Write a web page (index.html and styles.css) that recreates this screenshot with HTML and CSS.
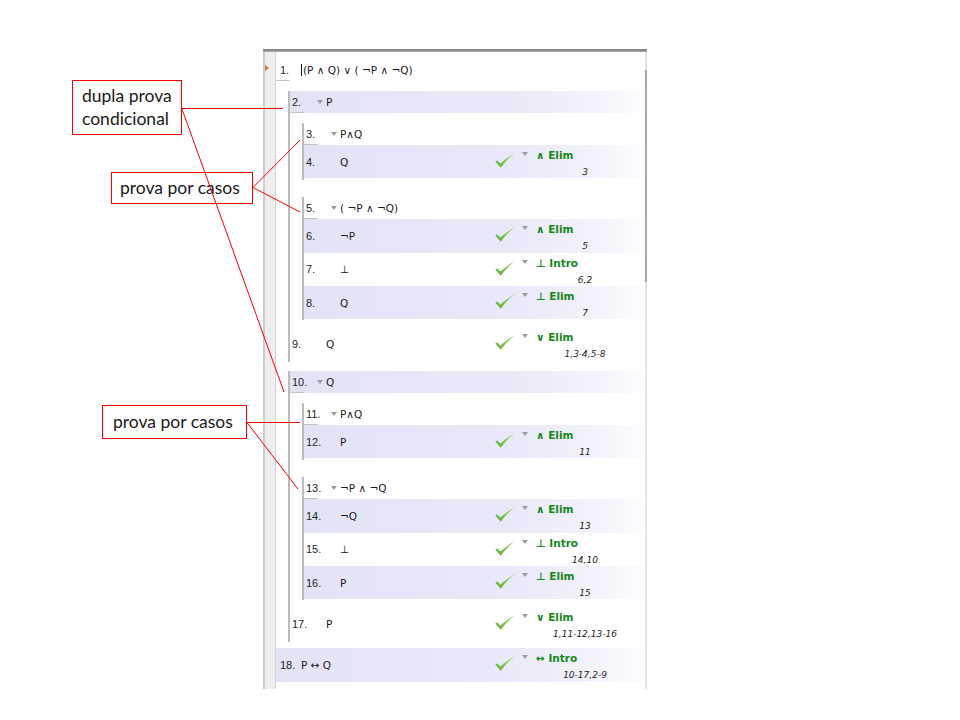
FILE: index.html
```html
<!DOCTYPE html>
<html lang="pt">
<head>
<meta charset="utf-8">
<title>Prova</title>
<link rel="stylesheet" href="styles.css">
</head>
<body>
<div class="page">
  <svg class="defs" width="0" height="0" aria-hidden="true"><defs><linearGradient id="cg" x1="0" y1="1" x2="1" y2="0"><stop offset="0" stop-color="#5da63a"/><stop offset="0.5" stop-color="#82c852"/><stop offset="1" stop-color="#b4e38a"/></linearGradient><symbol id="ck" viewBox="0 0 20 15"><path d="M0.3 8.6 L2.3 7.5 L5.4 10.6 Q12 4 19.8 0.2 Q12.5 5.6 5.7 14.8 Z"/></symbol></defs></svg>
  <div class="panel">
    <div class="panel-top"></div>
    <div class="panel-body">
      <div class="gutter"><span class="pointer"></span></div>
      <div class="proof">
        <div class="row hyp lvl0"><span class="num">1.</span><span class="fml"><span class="caret"></span>(P ∧ Q) ∨ ( ¬P ∧ ¬Q)</span></div>

        <div class="sub sub-outer">
          <div class="row hyp band"><span class="num">2.</span><span class="tri"></span><span class="fml">P</span></div>
          <div class="sub sub-first">
            <div class="row hyp"><span class="num">3.</span><span class="tri"></span><span class="fml">P∧Q</span></div>
            <div class="row step band"><span class="num">4.</span><span class="fml">Q</span>
              <div class="just">
                <svg class="check"><use href="#ck"/></svg>
                <span class="jtri"></span>
                <div class="rule"><div class="rname">∧ Elim</div><div class="refs">3</div></div>
              </div>
            </div>
          </div>
          <div class="sub sub-second">
            <div class="row hyp"><span class="num">5.</span><span class="tri"></span><span class="fml">( ¬P ∧ ¬Q)</span></div>
            <div class="row step band"><span class="num">6.</span><span class="fml">¬P</span>
              <div class="just">
                <svg class="check"><use href="#ck"/></svg>
                <span class="jtri"></span>
                <div class="rule"><div class="rname">∧ Elim</div><div class="refs">5</div></div>
              </div>
            </div>
            <div class="row step"><span class="num">7.</span><span class="fml">⊥</span>
              <div class="just">
                <svg class="check"><use href="#ck"/></svg>
                <span class="jtri"></span>
                <div class="rule"><div class="rname">⊥ Intro</div><div class="refs">6,2</div></div>
              </div>
            </div>
            <div class="row step band"><span class="num">8.</span><span class="fml">Q</span>
              <div class="just">
                <svg class="check"><use href="#ck"/></svg>
                <span class="jtri"></span>
                <div class="rule"><div class="rname">⊥ Elim</div><div class="refs">7</div></div>
              </div>
            </div>
          </div>
          <div class="row step closing"><span class="num">9.</span><span class="fml">Q</span>
            <div class="just">
              <svg class="check"><use href="#ck"/></svg>
              <span class="jtri"></span>
              <div class="rule"><div class="rname">∨ Elim</div><div class="refs">1,3-4,5-8</div></div>
            </div>
          </div>
        </div>

        <div class="sub sub-outer sub-next">
          <div class="row hyp band"><span class="num">10.</span><span class="tri"></span><span class="fml">Q</span></div>
          <div class="sub sub-first">
            <div class="row hyp"><span class="num">11.</span><span class="tri"></span><span class="fml">P∧Q</span></div>
            <div class="row step band"><span class="num">12.</span><span class="fml">P</span>
              <div class="just">
                <svg class="check"><use href="#ck"/></svg>
                <span class="jtri"></span>
                <div class="rule"><div class="rname">∧ Elim</div><div class="refs">11</div></div>
              </div>
            </div>
          </div>
          <div class="sub sub-second">
            <div class="row hyp"><span class="num">13.</span><span class="tri"></span><span class="fml">¬P ∧ ¬Q</span></div>
            <div class="row step band"><span class="num">14.</span><span class="fml">¬Q</span>
              <div class="just">
                <svg class="check"><use href="#ck"/></svg>
                <span class="jtri"></span>
                <div class="rule"><div class="rname">∧ Elim</div><div class="refs">13</div></div>
              </div>
            </div>
            <div class="row step"><span class="num">15.</span><span class="fml">⊥</span>
              <div class="just">
                <svg class="check"><use href="#ck"/></svg>
                <span class="jtri"></span>
                <div class="rule"><div class="rname">⊥ Intro</div><div class="refs">14,10</div></div>
              </div>
            </div>
            <div class="row step band"><span class="num">16.</span><span class="fml">P</span>
              <div class="just">
                <svg class="check"><use href="#ck"/></svg>
                <span class="jtri"></span>
                <div class="rule"><div class="rname">⊥ Elim</div><div class="refs">15</div></div>
              </div>
            </div>
          </div>
          <div class="row step closing"><span class="num">17.</span><span class="fml">P</span>
            <div class="just">
              <svg class="check"><use href="#ck"/></svg>
              <span class="jtri"></span>
              <div class="rule"><div class="rname">∨ Elim</div><div class="refs">1,11-12,13-16</div></div>
            </div>
          </div>
        </div>

        <div class="row step band lvl0 last"><span class="num">18.</span><span class="fml">P ↔ Q</span>
          <div class="just">
            <svg class="check"><use href="#ck"/></svg>
            <span class="jtri"></span>
            <div class="rule"><div class="rname">↔ Intro</div><div class="refs">10-17,2-9</div></div>
          </div>
        </div>
      </div>
    </div>
    <span class="thumb"></span>
  </div>

  <div class="note note-a">dupla prova<br>condicional</div>
  <div class="note note-b">prova por casos</div>
  <div class="note note-c">prova por casos</div>

  <svg class="leaders" viewBox="0 0 960 720">
    <line x1="182" y1="108.5" x2="283" y2="108.5"/>
    <line x1="182" y1="109" x2="284" y2="392"/>
    <line x1="253" y1="187.5" x2="300" y2="140"/>
    <line x1="253" y1="187.5" x2="300" y2="212"/>
    <line x1="247" y1="422.5" x2="300" y2="422.5"/>
    <line x1="247" y1="422.5" x2="298" y2="489"/>
  </svg>
</div>
</body>
</html>
```

FILE: styles.css
```css
* {
  box-sizing: border-box;
}

body {
  margin: 0;
  background: #ffffff;
}

.page {
  position: relative;
  width: 960px;
  height: 720px;
  overflow: hidden;
  padding: 49px 0 0 263px;
}

.defs {
  position: absolute;
  width: 0;
  height: 0;
}

/* ---------- proof panel ---------- */
.panel {
  position: relative;
  width: 384px;
  height: 640px;
  display: flex;
  flex-direction: column;
}

.panel-top {
  height: 3px;
  background: linear-gradient(#7c7c7c, #a9a9a9);
}

.panel-body {
  flex: 1;
  display: flex;
  border-right: 2px solid #e3e3e3;
}

.thumb {
  position: absolute;
  right: 0;
  top: 21px;
  width: 2px;
  height: 212px;
  background: #a6a6a6;
}

.gutter {
  position: relative;
  width: 13px;
  flex: none;
  background: #eeeeee;
  border-left: 2px solid #cdcdcd;
  border-right: 1px solid #d4d4d4;
}

.pointer {
  position: absolute;
  left: 0;
  top: 13px;
  width: 0;
  height: 0;
  border-left: 4px solid #cf7a2e;
  border-top: 3px solid transparent;
  border-bottom: 3px solid transparent;
}

.proof {
  flex: 1;
  padding-top: 7px;
  font-family: "DejaVu Sans", sans-serif;
  font-size: 10.5px;
  color: #222222;
}

/* subproof brackets */
.sub {
  margin-left: 12px;
  border-left: 2px solid #bcbcbc;
}

.sub-outer {
  margin-top: 10px;
  padding-bottom: 1.5px;
}

.sub-next {
  margin-top: 9px;
}

.sub-first {
  margin-top: 10px;
  padding-bottom: 2px;
}

.sub-second {
  margin-top: 17px;
  padding-bottom: 1px;
}

/* rows */
.row {
  position: relative;
  display: flex;
  align-items: center;
  height: 22px;
  padding-left: 2px;
  white-space: nowrap;
}

.row.lvl0 {
  padding-left: 4px;
}

.row.step {
  height: 33.33px;
}

.row.closing {
  margin-top: 7px;
}

.row.last {
  margin-top: 6px;
}

.row.hyp::after {
  content: "";
  position: absolute;
  left: 0;
  bottom: 0;
  width: 14px;
  height: 1px;
  background: #c4c4c4;
}

.band {
  background: linear-gradient(to right, #e3e3f6 0%, #e9e9f9 62%, #f4f4fc 88%, #fdfdff 100%);
}

.num {
  flex: none;
  width: 24px;
  font-family: "Liberation Sans", sans-serif;
  font-size: 11px;
  color: #1e1e1e;
}

.lvl0 .num {
  width: 21px;
}

.tri {
  flex: none;
  width: 0;
  height: 0;
  margin: 0 3px 0 1px;
  border-left: 3px solid transparent;
  border-right: 3px solid transparent;
  border-top: 4px solid #9c9c9c;
}

.fml {
  color: #24181c;
}

.step .fml {
  padding-left: 10px;
}

.lvl0.step .fml {
  padding-left: 0;
}

.caret {
  display: inline-block;
  width: 1px;
  height: 12px;
  margin-right: 1px;
  background: #111111;
  vertical-align: -2px;
}

/* justification column */
.just {
  margin-left: auto;
  width: 150px;
  align-self: stretch;
  display: flex;
  align-items: flex-start;
  flex: none;
}

.check {
  flex: none;
  width: 20px;
  height: 15px;
  margin-top: 8px;
  fill: url(#cg);
}

.jtri {
  flex: none;
  width: 0;
  height: 0;
  margin: 7px 0 0 7px;
  border-left: 3px solid transparent;
  border-right: 3px solid transparent;
  border-top: 4px solid #9c9c9c;
}

.rule {
  flex: none;
  width: 98px;
  margin-left: 8px;
  padding-top: 3px;
}

.rname {
  font-family: "DejaVu Sans", sans-serif;
  font-weight: bold;
  font-size: 10.5px;
  line-height: 14px;
  color: #17861b;
}

.refs {
  margin-top: 4px;
  font-family: "DejaVu Sans", sans-serif;
  font-style: italic;
  font-size: 9px;
  line-height: 12px;
  text-align: center;
  color: #222222;
}

/* ---------- annotations ---------- */
.note {
  position: absolute;
  border: 1px solid #ff0000;
  background: #ffffff;
  font-family: Lato, "Open Sans", sans-serif;
  font-size: 17.5px;
  color: #1a1a1a;
  white-space: nowrap;
}

.note-a {
  left: 72px;
  top: 80px;
  width: 110px;
  height: 55px;
  padding: 4px 0 0 9px;
  line-height: 22.5px;
}

.note-b {
  left: 111px;
  top: 172px;
  width: 142px;
  height: 32px;
  padding-left: 8px;
  line-height: 29px;
}

.note-c {
  left: 102px;
  top: 405px;
  width: 145px;
  height: 34px;
  padding-left: 10px;
  line-height: 31px;
}

.leaders {
  position: absolute;
  left: 0;
  top: 0;
  width: 960px;
  height: 720px;
  pointer-events: none;
  stroke: #ff0000;
  stroke-width: 1;
  fill: none;
}
```
